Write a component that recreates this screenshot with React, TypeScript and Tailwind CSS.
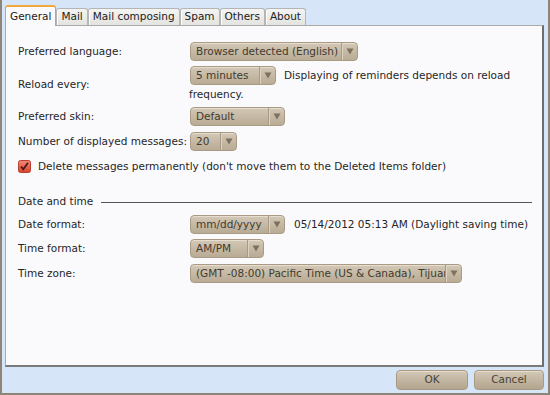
import React from "react";

const font = { fontFamily: '"DejaVu Sans", Verdana, sans-serif' };

function Select({ w, label }: { w: string; label: string }) {
  return (
    <div
      className={`${w} h-[19px] flex items-stretch rounded-[4px] border border-[#a89a84] bg-gradient-to-b from-[#d3c8b6] to-[#b9ab94] shadow-[inset_0_1px_0_#e6ddcf] text-[#423a2f] overflow-hidden shrink-0`}
    >
      <div className="flex-1 min-w-0 pl-[5px] flex items-center whitespace-nowrap overflow-hidden text-[10.5px] leading-none">
        {label}
      </div>
      <div className="w-[16px] border-l border-[#a89a84] shadow-[inset_1px_0_0_#ddd3c4] flex items-center justify-center shrink-0">
        <svg width="8" height="7" viewBox="0 0 8 7">
          <path d="M0.5 0.5 L7.5 0.5 L4 6.5 Z" fill="#7d715f" />
        </svg>
      </div>
    </div>
  );
}

function Tab({ label, active }: { label: string; active?: boolean }) {
  if (active) {
    return (
      <div className="relative z-10 -mb-px h-[21px] px-[4px] flex items-center rounded-t-[3px] border border-b-0 border-[#a9a9a9] border-t-2 border-t-[#f2a93b] bg-[#fafafd] text-[10.5px] text-[#1b1b1b]">
        {label}
      </div>
    );
  }
  return (
    <div className="h-[17px] px-[4px] flex items-center rounded-t-[3px] border border-b-0 border-[#b5b5b5] bg-gradient-to-b from-[#f4f4f2] to-[#e3e3df] text-[10.5px] text-[#222] shadow-[inset_1px_0_0_#ffffff]">
      {label}
    </div>
  );
}

function Label({ children }: { children: React.ReactNode }) {
  return <div className="text-[10.5px] text-[#262626] whitespace-nowrap">{children}</div>;
}

export default function App() {
  return (
    <div
      style={font}
      className="w-[550px] h-[395px] bg-[#d6e6f8] border-x-2 border-b-2 border-[#8e8576] flex flex-col overflow-hidden"
    >
      <div className="flex items-end pl-[3px] pt-[5px]">
        <Tab label="General" active />
        <Tab label="Mail" />
        <Tab label="Mail composing" />
        <Tab label="Spam" />
        <Tab label="Others" />
        <Tab label="About" />
      </div>
      <div className="ml-[3px] mr-[4px] h-[342px] bg-[#fafafd] border border-[#a9a9a9] border-r-2 border-b-2 border-r-[#6e6e6e] border-b-[#7a7a7a] pl-[12px] pr-[10px] pt-[16px]">
        <div className="grid grid-cols-[172px_1fr] items-center">
          <Label>Preferred language:</Label>
          <Select w="w-[168px]" label="Browser detected (English)" />

          <div className="col-span-2 h-[5px]" />
          <Label>Reload every:</Label>
          <div className="flex flex-col">
            <div className="flex items-center gap-[8px]">
              <Select w="w-[86px]" label="5 minutes" />
              <span className="text-[10.5px] text-[#262626] whitespace-nowrap">
                Displaying of reminders depends on reload
              </span>
            </div>
            <div className="text-[10.5px] text-[#262626] -ml-px leading-[18px]">frequency.</div>
          </div>

          <div className="col-span-2 h-[4px]" />
          <Label>Preferred skin:</Label>
          <Select w="w-[95px]" label="Default" />

          <div className="col-span-2 h-[6px]" />
          <Label>Number of displayed messages:</Label>
          <Select w="w-[47px]" label="20" />
        </div>

        <div className="flex items-center gap-[7px] mt-[9px] h-[13px]">
          <svg width="13" height="13" viewBox="0 0 13 13">
            <defs>
              <linearGradient id="cb" x1="0" y1="0" x2="0" y2="1">
                <stop offset="0" stopColor="#f28a78" />
                <stop offset="1" stopColor="#d8432e" />
              </linearGradient>
            </defs>
            <rect x="0.5" y="0.5" width="12" height="12" rx="2" fill="url(#cb)" stroke="#b7412f" />
            <path d="M3 6.5 L5.3 9.3 L10 2.8" fill="none" stroke="#4a1a12" strokeWidth="1.8" />
          </svg>
          <span className="text-[10.5px] text-[#262626] whitespace-nowrap">
            Delete messages permanently (don't move them to the Deleted Items folder)
          </span>
        </div>

        <div className="flex items-center mt-[22px] h-[14px]">
          <span className="text-[10.5px] text-[#262626] whitespace-nowrap">Date and time</span>
          <div className="flex-1 ml-[8px] h-px bg-[#555]" />
        </div>

        <div className="grid grid-cols-[172px_1fr] items-center mt-[6px]">
          <Label>Date format:</Label>
          <div className="flex items-center gap-[9px]">
            <Select w="w-[95px]" label="mm/dd/yyyy" />
            <span className="text-[10.5px] text-[#262626] whitespace-nowrap">
              05/14/2012 05:13 AM (Daylight saving time)
            </span>
          </div>

          <div className="col-span-2 h-[5px]" />
          <Label>Time format:</Label>
          <Select w="w-[74px]" label="AM/PM" />

          <div className="col-span-2 h-[6px]" />
          <Label>Time zone:</Label>
          <Select w="w-[272px]" label="(GMT -08:00) Pacific Time (US & Canada), Tijuana" />
        </div>
      </div>
      <div className="flex justify-end gap-[6px] pr-[4px] pt-[3px]">
        <button className="w-[72px] h-[20px] rounded-[4px] border border-[#a89a84] bg-gradient-to-b from-[#d3c8b6] to-[#b3a58e] shadow-[inset_0_1px_0_#e6ddcf] text-[10.5px] text-[#4a4236]">
          OK
        </button>
        <button className="w-[70px] h-[20px] rounded-[4px] border border-[#a89a84] bg-gradient-to-b from-[#d3c8b6] to-[#b3a58e] shadow-[inset_0_1px_0_#e6ddcf] text-[10.5px] text-[#4a4236]">
          Cancel
        </button>
      </div>
    </div>
  );
}
